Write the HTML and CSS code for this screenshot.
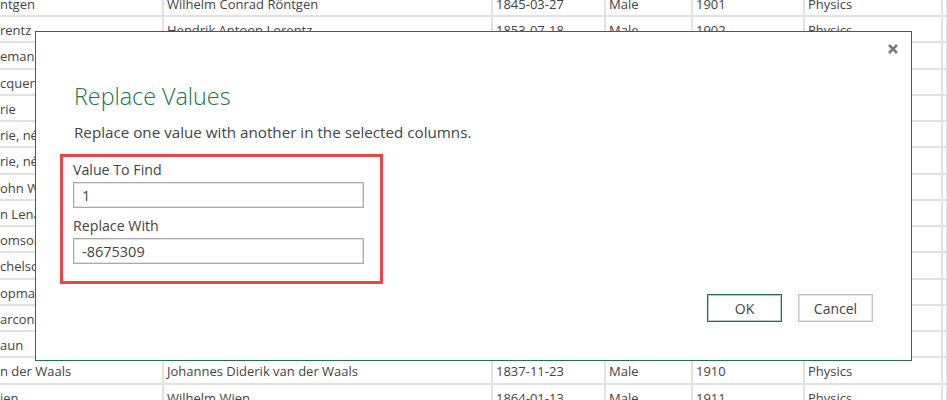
FILE: index.html
```html
<!DOCTYPE html>
<html>
<head>
<meta charset="utf-8">
<link rel="stylesheet" href="styles.css">
</head>
<body>
<div class="sheet">
  <div class="row"><div class="c c1">ntgen</div><div class="c">Wilhelm Conrad Röntgen</div><div class="c">1845-03-27</div><div class="c">Male</div><div class="c">1901</div><div class="c">Physics</div><div class="c"></div></div>
  <div class="row"><div class="c c1">rentz</div><div class="c">Hendrik Antoon Lorentz</div><div class="c">1853-07-18</div><div class="c">Male</div><div class="c">1902</div><div class="c">Physics</div><div class="c"></div></div>
  <div class="row"><div class="c c1">eman</div><div class="c">Pieter Zeeman</div><div class="c">1865-05-25</div><div class="c">Male</div><div class="c">1902</div><div class="c">Physics</div><div class="c"></div></div>
  <div class="row"><div class="c c1">cquerel</div><div class="c">Antoine Henri Becquerel</div><div class="c">1852-12-15</div><div class="c">Male</div><div class="c">1903</div><div class="c">Physics</div><div class="c"></div></div>
  <div class="row"><div class="c c1">rie</div><div class="c">Pierre Curie</div><div class="c">1859-05-15</div><div class="c">Male</div><div class="c">1903</div><div class="c">Physics</div><div class="c"></div></div>
  <div class="row"><div class="c c1">rie, née Skłodowska</div><div class="c">Marie Curie, née Skłodowska</div><div class="c">1867-11-07</div><div class="c">Female</div><div class="c">1903</div><div class="c">Physics</div><div class="c"></div></div>
  <div class="row"><div class="c c1">rie, née Skłodowska</div><div class="c">Marie Curie, née Skłodowska</div><div class="c">1867-11-07</div><div class="c">Female</div><div class="c">1911</div><div class="c">Chemistry</div><div class="c"></div></div>
  <div class="row"><div class="c c1">ohn William Strutt</div><div class="c">Lord Rayleigh (John William Strutt)</div><div class="c">1842-11-12</div><div class="c">Male</div><div class="c">1904</div><div class="c">Physics</div><div class="c"></div></div>
  <div class="row"><div class="c c1">n Lenard</div><div class="c">Philipp Eduard Anton von Lenard</div><div class="c">1862-06-07</div><div class="c">Male</div><div class="c">1905</div><div class="c">Physics</div><div class="c"></div></div>
  <div class="row"><div class="c c1">omson</div><div class="c">Joseph John Thomson</div><div class="c">1856-12-18</div><div class="c">Male</div><div class="c">1906</div><div class="c">Physics</div><div class="c"></div></div>
  <div class="row"><div class="c c1">chelson</div><div class="c">Albert Abraham Michelson</div><div class="c">1852-12-19</div><div class="c">Male</div><div class="c">1907</div><div class="c">Physics</div><div class="c"></div></div>
  <div class="row"><div class="c c1">opmann</div><div class="c">Gabriel Lippmann</div><div class="c">1845-08-16</div><div class="c">Male</div><div class="c">1908</div><div class="c">Physics</div><div class="c"></div></div>
  <div class="row"><div class="c c1">arconi</div><div class="c">Guglielmo Marconi</div><div class="c">1874-04-25</div><div class="c">Male</div><div class="c">1909</div><div class="c">Physics</div><div class="c"></div></div>
  <div class="row"><div class="c c1">aun</div><div class="c">Karl Ferdinand Braun</div><div class="c">1850-06-06</div><div class="c">Male</div><div class="c">1909</div><div class="c">Physics</div><div class="c"></div></div>
  <div class="row"><div class="c c1">n der Waals</div><div class="c">Johannes Diderik van der Waals</div><div class="c">1837-11-23</div><div class="c">Male</div><div class="c">1910</div><div class="c">Physics</div><div class="c"></div></div>
  <div class="row"><div class="c c1">ien</div><div class="c">Wilhelm Wien</div><div class="c">1864-01-13</div><div class="c">Male</div><div class="c">1911</div><div class="c">Physics</div><div class="c"></div></div>
</div>

<div class="dialog">
  <button class="close" aria-label="Close">
    <svg width="10" height="10" viewBox="0 0 10 10"><path d="M1 1 L9 9 M9 1 L1 9" stroke="#7a7a7a" stroke-width="2.6" stroke-linecap="butt" fill="none"/></svg>
  </button>
  <h1 class="title">Replace Values</h1>
  <p class="subtitle">Replace one value with another in the selected columns.</p>
  <div class="redbox">
    <div class="label">Value To Find</div>
    <div class="input">1</div>
    <div class="label label2">Replace With</div>
    <div class="input">-8675309</div>
  </div>
  <div class="buttons">
    <div class="btn btn-ok">OK</div>
    <div class="btn btn-cancel">Cancel</div>
  </div>
</div>
</body>
</html>
```

FILE: styles.css
```css
html, body {
  margin: 0;
  padding: 0;
  background: #ffffff;
  overflow: hidden;
}
body {
  width: 947px;
  height: 400px;
  position: relative;
  font-family: "Open Sans", "Noto Sans", sans-serif;
  color: #444444;
}
.sheet {
  margin-top: -9.25px;
}
.row {
  display: grid;
  grid-template-columns: 164px 329px 113px 87px 112px 138px 1fr;
  height: 26.25px;
}
.c {
  box-sizing: border-box;
  border-right: 2px solid #e2e2e2;
  border-bottom: 2px solid #e2e2e2;
  padding-left: 3px;
  font-size: 13px;
  line-height: 26px;
  white-space: nowrap;
  overflow: hidden;
  color: #444444;
}
.c1 {
  padding-left: 0;
}
.dialog {
  position: absolute;
  left: 35px;
  top: 31px;
  width: 877px;
  height: 330px;
  box-sizing: border-box;
  border: 1px solid #217346;
  background: #ffffff;
  padding: 48px 38px 0 24px;
}
.close {
  position: absolute;
  right: 13px;
  top: 12px;
  width: 10px;
  height: 10px;
  padding: 0;
  margin: 0;
  border: 0;
  background: transparent;
  display: block;
}
.close svg {
  display: block;
}
.title {
  margin: 0 0 0 14px;
  font-weight: 300;
  font-size: 23.3px;
  line-height: 32px;
  color: #217346;
}
.subtitle {
  margin: 10px 0 0 14px;
  font-size: 15.2px;
  line-height: 20px;
  color: #444444;
}
.redbox {
  margin-top: 12px;
  width: 323px;
  box-sizing: border-box;
  border: 3px solid #e8474a;
  padding: 3px 0 17px 10px;
}
.label {
  font-size: 14.2px;
  line-height: 20px;
  color: #444444;
}
.label2 {
  margin-top: 8px;
}
.input {
  margin-top: 2px;
  width: 291px;
  height: 26px;
  box-sizing: border-box;
  border: 1px solid #a9a9a9;
  box-shadow: inset 0 0 0 1px #e3e3e3;
  padding-left: 8px;
  font-size: 14.5px;
  display: flex;
  align-items: center;
  color: #444444;
}
.buttons {
  display: flex;
  justify-content: flex-end;
  gap: 16px;
  margin-top: 10px;
}
.btn {
  width: 75px;
  height: 28px;
  box-sizing: border-box;
  display: flex;
  align-items: center;
  justify-content: center;
  font-size: 14px;
  color: #444444;
  background: #ffffff;
}
.btn-ok {
  border: 1px solid #217346;
  box-shadow: inset 0 0 0 1px rgba(33, 115, 70, 0.35);
}
.btn-cancel {
  border: 1px solid #c4c4c4;
  box-shadow: inset 0 0 0 1px #e6e6e6;
}
```
